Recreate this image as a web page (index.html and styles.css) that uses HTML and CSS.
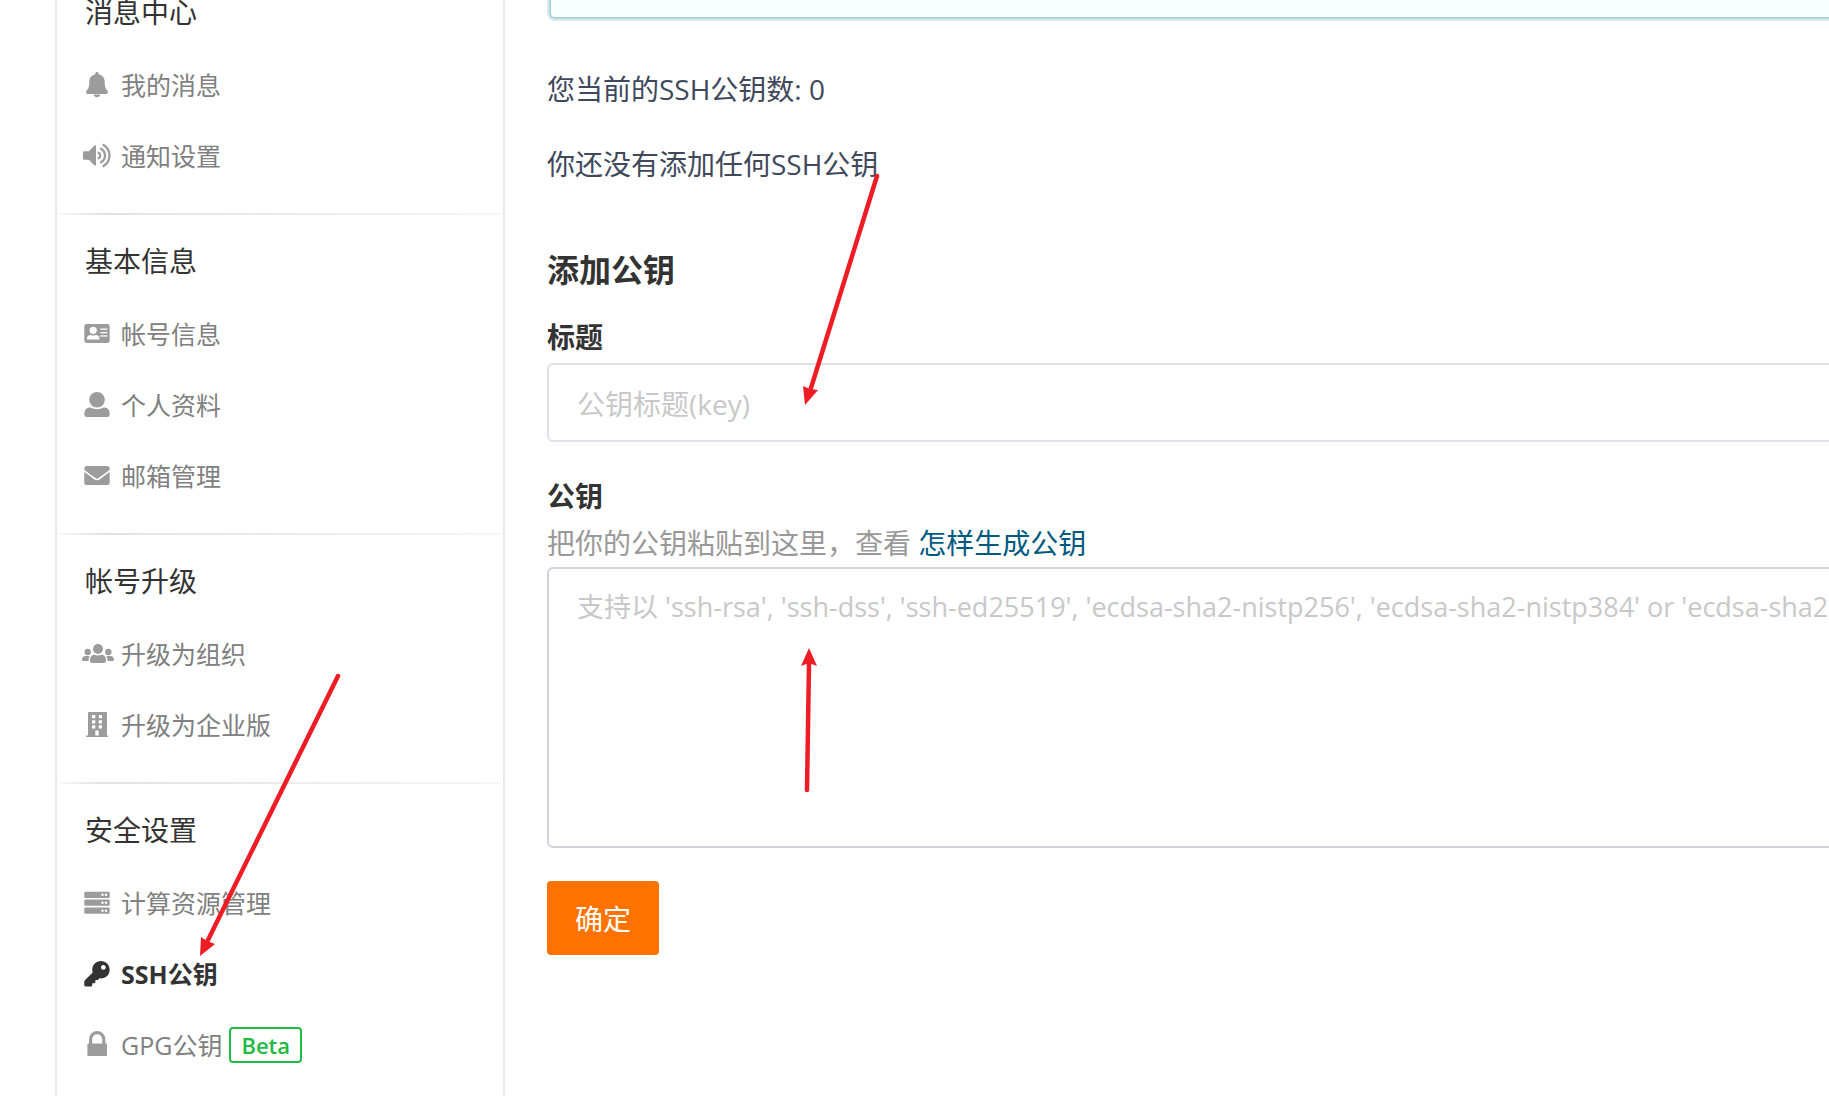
FILE: index.html
```html
<!DOCTYPE html>
<html lang="zh-CN">
<head>
<meta charset="utf-8">
<meta name="viewport" content="width=device-width, initial-scale=1">
<title>SSH公钥</title>
<link rel="stylesheet" href="styles.css">
</head>
<body>
<div class="page">
  <aside class="sidebar">
    <nav class="menu">
      <section class="group">
        <h2 class="group-title">消息中心</h2>
        <a class="item" href="#"><svg class="icon" viewBox="0 0 33 33"><path d="M16 4c1 0 1.700.7 1.700 1.700v.5c3.600.8 6 3.600 6 7.300 0 5.500 1 7.500 2.800 9.300.9 1 .5 3.200-1.100 3.200H6.600c-1.600 0-2-2.200-1.100-3.200 1.800-1.800 2.800-3.800 2.800-9.300 0-3.700 2.400-6.500 6-7.300v-.5C14.300 4.700 15 4 16 4zM12.800 26.500h6.400c0 1.700-1.400 2.800-3.200 2.800s-3.200-1.100-3.200-2.800z"/></svg>我的消息</a>
        <a class="item" href="#"><svg class="icon" viewBox="0 0 33 33"><path d="M2 13.500c0-.8.500-1.300 1.300-1.300h4.500l5.400-5.400c.8-.8 1.800-.4 1.800.6v18.200c0 1-1 1.400-1.800.6l-5.400-5.400H3.300c-.8 0-1.300-.5-1.300-1.300z"/><g fill="none" stroke="currentColor" stroke-width="2.300" stroke-linecap="round"><path d="M17.600 13.700a3.200 3.200 0 0 1 0 5.600M20 9.700a7.800 7.800 0 0 1 0 13.600M22.500 5.900a12.400 12.400 0 0 1 0 21.200"/></g></svg>通知设置</a>
      </section>
      <section class="group">
        <h2 class="group-title">基本信息</h2>
        <a class="item" href="#"><svg class="icon" viewBox="0 0 33 33"><rect x="3.300" y="7" width="25.400" height="19" rx="2.400"/><g fill="#fff"><circle cx="12.200" cy="13.300" r="3.600"/><path d="M6 22.600v-1.200c0-2 1.500-3.500 3.500-3.500 1.800.9 3.600.9 5.400 0 2 0 3.500 1.500 3.500 3.500v1.200z"/><rect x="19.300" y="11.500" width="7" height="1.300"/><rect x="19.300" y="15" width="7" height="1.300"/><rect x="19.300" y="18.300" width="7" height="1.300"/></g></svg>帐号信息</a>
        <a class="item" href="#"><svg class="icon" viewBox="0 0 33 33"><ellipse cx="16" cy="11.800" rx="7.800" ry="7.800"/><path d="M3.300 26.600c0-4.500 2-7 6-7 4.500 2.300 8.900 2.300 13.400 0 4 0 6 2.500 6 7 0 1.500-.9 2.400-2.400 2.400H5.700c-1.500 0-2.400-.9-2.400-2.400z"/></svg>个人资料</a>
        <a class="item" href="#"><svg class="icon" viewBox="0 0 33 33"><path transform="translate(3.300 3.800) scale(.0496)" d="M502.300 190.800c3.900-3.100 9.700-.2 9.700 4.700V400c0 26.500-21.500 48-48 48H48c-26.500 0-48-21.500-48-48V195.600c0-5 5.700-7.800 9.700-4.700 22.400 17.400 52.100 39.500 154.100 113.600 21.100 15.400 56.700 47.800 92.200 47.600 35.700.3 72-32.800 92.300-47.600 102-74.100 131.600-96.300 154-113.700zM256 320c23.200.4 56.600-29.200 73.400-41.400 132.700-96.300 142.800-104.700 173.400-128.700 5.800-4.500 9.200-11.500 9.200-18.900v-19c0-26.500-21.500-48-48-48H48c-26.500 0-48 21.500-48 48v19c0 7.400 3.400 14.300 9.200 18.900 30.600 23.900 40.700 32.400 173.400 128.700 16.800 12.200 50.200 41.800 73.400 41.400z"/></svg>邮箱管理</a>
      </section>
      <section class="group">
        <h2 class="group-title">帐号升级</h2>
        <a class="item" href="#"><svg class="icon" viewBox="0 0 33 33"><circle cx="17" cy="12" r="5"/><circle cx="6.700" cy="15" r="3.200"/><circle cx="27.300" cy="15" r="3.200"/><path d="M9 23.600c0-3.600 1.500-5.800 4.500-5.800 2.300 1 4.700 1 7 0 3 0 4.500 2.200 4.500 5.800 0 1.500-.8 2.400-2.200 2.400H11.200C9.800 26 9 25.100 9 23.600zM1 22.800c0-2.500 1.400-3.900 3.600-3.900h2.200c.8 0 1.500.2 2 .5-1 1.200-1.300 2.700-1.300 4.500H2.200c-.8 0-1.200-.4-1.200-1.100zM33 22.800c0-2.500-1.400-3.900-3.600-3.900h-2.200c-.8 0-1.500.2-2 .5 1 1.200 1.300 2.700 1.300 4.500h5.300c.8 0 1.200-.4 1.200-1.100z"/></svg>升级为组织</a>
        <a class="item" href="#"><svg class="icon" viewBox="0 0 33 33"><path fill-rule="evenodd" d="M7.800 4h17.400c.5 0 .8.300.8.800v22.600h.4c.4 0 .7.300.7.700v.9H5v-.9c0-.4.300-.7.700-.7H7V4.800c0-.5.300-.8.800-.8zM11 7v3.200h3.300V7zm6.700 0v3.200H21V7zM11 12.200v3.200h3.300v-3.200zm6.700 0v3.200H21v-3.200zM11 17.200v3.200h3.300v-3.200zm6.700 0v3.200H21v-3.200zM14.300 22.500v4.900h3.400v-4.900z"/></svg>升级为企业版</a>
      </section>
      <section class="group">
        <h2 class="group-title">安全设置</h2>
        <a class="item" href="#"><svg class="icon" viewBox="0 0 33 33"><rect x="3.300" y="5.700" width="25.400" height="6.200" rx="1.200"/><rect x="3.300" y="13.600" width="25.400" height="6.200" rx="1.200"/><rect x="3.300" y="21.600" width="25.400" height="6.200" rx="1.200"/><g fill="#fff"><circle cx="21.500" cy="8.800" r="1.200"/><circle cx="25" cy="8.800" r="1.200"/><circle cx="21.500" cy="16.700" r="1.200"/><circle cx="25" cy="16.700" r="1.200"/><circle cx="21.500" cy="24.700" r="1.200"/><circle cx="25" cy="24.700" r="1.200"/></g></svg>计算资源管理</a>
        <a class="item active" href="#" aria-current="page"><svg class="icon" viewBox="0 0 33 33"><path transform="translate(3.300 4) scale(.0496)" d="M512 176.001C512 273.203 433.202 352 336 352c-11.220 0-22.190-1.062-32.827-3.069l-24.012 27.014A23.999 23.999 0 0 1 261.223 384H224v40c0 13.255-10.745 24-24 24h-40v40c0 13.255-10.745 24-24 24H24c-13.255 0-24-10.745-24-24v-78.059c0-6.365 2.529-12.470 7.029-16.971l161.802-161.802C163.108 213.814 160 195.271 160 176 160 78.798 238.797.001 335.999 0 433.488-.001 512 78.511 512 176.001zM336 128c0 26.510 21.490 48 48 48s48-21.490 48-48-21.490-48-48-48-48 21.490-48 48z"/></svg>SSH公钥</a>
        <a class="item" href="#"><svg class="icon" viewBox="0 0 33 33"><path fill-rule="evenodd" d="M8 15.500V11.200a8.200 8.200 0 0 1 16.400 0v4.300h.8c.5 0 .8.300.8.800v10.900c0 .5-.3.800-.8.800H7.200c-.5 0-.8-.3-.8-.8V16.300c0-.5.300-.8.800-.8zm3.200 0h10v-4.300a5 5 0 0 0-10 0z"/></svg>GPG公钥<span class="badge">Beta</span></a>
      </section>
    </nav>
  </aside>

  <main class="content">
    <div class="notice"></div>
    <p class="text">您当前的SSH公钥数: 0</p>
    <p class="text">你还没有添加任何SSH公钥</p>
    <form class="key-form">
      <h3 class="form-title">添加公钥</h3>
      <div class="field">
        <label class="label" for="key-title">标题</label>
        <input class="input" id="key-title" type="text" placeholder="公钥标题(key)">
      </div>
      <div class="field">
        <label class="label" for="key-body">公钥</label>
        <p class="hint">把你的公钥粘贴到这里，查看 <a class="link" href="#">怎样生成公钥</a></p>
        <textarea class="input area" id="key-body" placeholder="支持以 'ssh-rsa', 'ssh-dss', 'ssh-ed25519', 'ecdsa-sha2-nistp256', 'ecdsa-sha2-nistp384' or 'ecdsa-sha2-"></textarea>
      </div>
      <button class="submit" type="button">确定</button>
    </form>
  </main>

  <svg class="arrows" width="900" height="970" viewBox="0 0 900 970" aria-hidden="true">
    <g stroke="#ee1c25" stroke-width="4.500" stroke-linecap="round">
      <path d="M877 176L811 388M338 676L208 940M807 790L809 664"/>
    </g>
    <g fill="#ee1c25">
      <path d="M805 405L803 386L810 389L818 390z"/>
      <path d="M200 956L201 937L207 941L215 944z"/>
      <path d="M809 648L801 666L809 663L817 666z"/>
    </g>
  </svg>
</div>
</body>
</html>
```
FILE: styles.css
```css
* {
  box-sizing: border-box;
}

body {
  margin: 0;
  background: #fff;
  color: #40485b;
  font-family: "Open Sans", "Noto Sans CJK SC", sans-serif;
  font-size: 28px;
  line-height: 42px;
}

.page {
  position: relative;
  display: flex;
  height: 100vh;
  overflow: hidden;
}

.sidebar {
  flex: 0 0 450px;
  margin-left: 55px;
  border: solid #e3e8ec;
  border-width: 0 2px;
}

/* The page is scrolled: the first group starts above the window. */
.menu {
  margin-top: -23px;
}

.group {
  padding-bottom: 22px;
}

.group + .group::before {
  content: "";
  display: block;
  height: 2px;
  margin: 0 2px 11px;
  background: linear-gradient(to right, #f7f7f7, #e2e2e2 10%, #f6f6f6);
}

.group-title {
  margin: 0;
  padding: 0 28px 2px;
  color: #333;
  font-size: 28px;
  font-weight: 400;
  line-height: 70px;
}

.item {
  display: flex;
  align-items: center;
  height: 71px;
  padding-left: 24px;
  color: #808080;
  font-size: 25px;
  text-decoration: none;
}

.icon {
  flex: none;
  width: 33px;
  height: 33px;
  margin-right: 7px;
  color: #9c9c9c;
  fill: currentColor;
}

.item.active,
.item.active .icon {
  color: #333;
}

.item.active {
  font-weight: 700;
}

.badge {
  margin-left: 7px;
  padding: 0 10px;
  border: 2px solid #21ba45;
  border-radius: 4px;
  color: #21ba45;
  font-size: 22px;
  font-weight: 600;
  line-height: 32px;
}

/* The form column runs on past the right edge of the window. */
.content {
  flex: 1;
  min-width: 0;
  margin: 0 -120px 0 42px;
}

.notice {
  height: 19px;
  margin: 0 2px 49px;
  border: 2px solid #a9d5de;
  border-top: 0;
  border-radius: 0 0 6px 6px;
  background: #f8ffff;
  box-shadow: 0 0 0 2px #e0e9ec;
}

.text {
  margin: 0 0 33px;
}

.key-form {
  padding-top: 31px;
}

.form-title {
  margin: 0 0 25px;
  color: #333;
  font-size: 32px;
  line-height: 42px;
}

.field {
  display: flex;
  flex-direction: column;
  margin-bottom: 33px;
}

.label {
  margin-bottom: 5px;
  color: #333;
  font-weight: 700;
}

.input {
  width: 100%;
  height: 79px;
  padding: 2px 28px 0;
  border: 2px solid #dde1e8;
  border-radius: 6px;
  background: #fff;
  color: #333;
  font: inherit;
}

.input::placeholder {
  color: #c8c8c8;
  opacity: 1;
}

.area {
  height: 281px;
  padding: 17px 28px;
  border-color: #cfd3de;
  font-size: 27px;
  overflow: hidden;
  resize: none;
  white-space: nowrap;
}

.hint {
  margin: 0 0 3px;
  color: #999;
}

.link {
  color: #005980;
  text-decoration: none;
}

.submit {
  height: 74px;
  padding: 2px 28px 0;
  border: 0;
  border-radius: 4px;
  background: #fe7300;
  color: #fff;
  font: inherit;
}

/* Annotation arrows drawn over the page. */
.arrows {
  position: absolute;
  top: 0;
  left: 0;
  pointer-events: none;
}
```
